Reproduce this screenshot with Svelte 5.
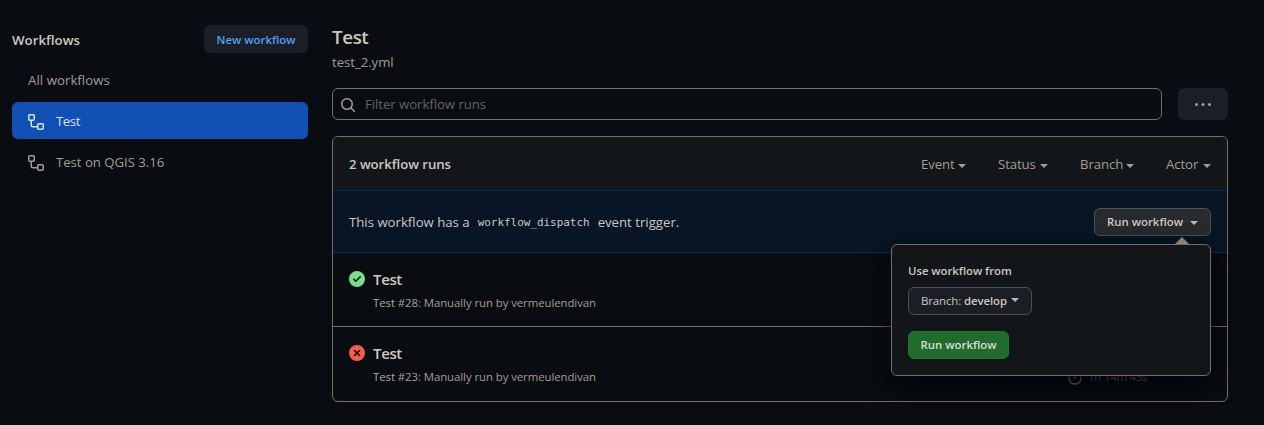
<script>
  const filters = [
    { name: 'Event', width: 34 },
    { name: 'Status', width: 39 },
    { name: 'Branch', width: 43 },
    { name: 'Actor', width: 34 }
  ];
  const runs = [
    { number: 28, ok: true, duration: '' },
    { number: 23, ok: false, duration: '1h 14m 43s' }
  ];
</script>

{#snippet workflowIcon()}
  <svg class="wf-icon" width="16" height="16" viewBox="0 0 16 16" fill="currentColor">
    <path d="M0 1.75C0 .784.784 0 1.75 0h3.5C6.216 0 7 .784 7 1.75v3.5A1.75 1.75 0 0 1 5.25 7H4v4a1 1 0 0 0 1 1h4v-1.25C9 9.784 9.784 9 10.75 9h3.5c.966 0 1.75.784 1.75 1.75v3.5A1.75 1.75 0 0 1 14.25 16h-3.5A1.75 1.75 0 0 1 9 14.25v-.75H5A2.5 2.5 0 0 1 2.5 11V7h-.75A1.75 1.75 0 0 1 0 5.25Zm1.75-.25a.25.25 0 0 0-.25.25v3.5c0 .138.112.25.25.25h3.5a.25.25 0 0 0 .25-.25v-3.5a.25.25 0 0 0-.25-.25Zm9 9a.25.25 0 0 0-.25.25v3.5c0 .138.112.25.25.25h3.5a.25.25 0 0 0 .25-.25v-3.5a.25.25 0 0 0-.25-.25Z" />
  </svg>
{/snippet}

<div class="page">
  <aside>
    <div class="side-head">
      <h2>Workflows</h2>
      <button class="new">New workflow</button>
    </div>
    <nav>
      <span class="all">All workflows</span>
      <span class="item selected">{@render workflowIcon()}<span>Test</span></span>
      <span class="item">{@render workflowIcon()}<span>Test on QGIS 3.16</span></span>
    </nav>
  </aside>

  <main>
    <h1>Test</h1>
    <div class="file">test_2.yml</div>
    <div class="tools">
      <div class="search">
        <svg width="16" height="16" viewBox="0 0 16 16" fill="currentColor">
          <path d="M10.68 11.74a6 6 0 0 1-7.922-8.982 6 6 0 0 1 8.982 7.922l3.04 3.04a.749.749 0 1 1-1.06 1.06ZM11.5 7a4.499 4.499 0 1 0-8.997 0A4.499 4.499 0 0 0 11.5 7Z" />
        </svg>
        <span>Filter workflow runs</span>
      </div>
      <button class="more" aria-label="More">
        <svg width="16" height="16" viewBox="0 0 16 16" fill="currentColor">
          <circle cx="1.5" cy="8.5" r="1.5" /><circle cx="8" cy="8.5" r="1.5" /><circle cx="14.5" cy="8.5" r="1.5" />
        </svg>
      </button>
    </div>

    <section class="box">
      <header>
        <strong>2 workflow runs</strong>
        <div class="filters">
          {#each filters as f}
            <span class="filter"><span style="width: {f.width}px">{f.name}</span><i class="caret"></i></span>
          {/each}
        </div>
      </header>

      <div class="dispatch">
        <p>
          <span class="lead">This workflow has a</span><code>workflow_dispatch</code><span>event trigger.</span>
        </p>
        <div class="run-menu">
          <button class="run"><span>Run workflow</span><i class="caret"></i></button>
          <div class="popover">
            <div class="label">Use workflow from</div>
            <button class="branch"><span>Branch:</span><b>develop</b><i class="caret"></i></button>
            <button class="go">Run workflow</button>
          </div>
        </div>
      </div>

      {#each runs as r}
        <div class="row">
          <svg width="16" height="16" viewBox="0 0 16 16" fill={r.ok ? '#7ade8b' : '#fb5a50'}>
            {#if r.ok}
              <path d="M8 16A8 8 0 1 1 8 0a8 8 0 0 1 0 16Zm3.78-9.72a.751.751 0 0 0-.018-1.042.751.751 0 0 0-1.042-.018L6.75 9.19 5.28 7.72a.751.751 0 0 0-1.042.018.751.751 0 0 0-.018 1.042l2 2a.75.75 0 0 0 1.06 0Z" />
            {:else}
              <path d="M2.343 13.657A8 8 0 1 1 13.658 2.343 8 8 0 0 1 2.343 13.657ZM6.03 4.97a.751.751 0 0 0-1.042.018.751.751 0 0 0-.018 1.042L6.94 8 4.97 9.97a.749.749 0 0 0 .326 1.275.749.749 0 0 0 .734-.215L8 9.06l1.97 1.97a.749.749 0 0 0 1.275-.326.749.749 0 0 0-.215-.734L9.06 8l1.97-1.97a.749.749 0 0 0-.326-1.275.749.749 0 0 0-.734.215L8 6.94Z" />
            {/if}
          </svg>
          <div class="info">
            <h3>Test</h3>
            <div class="desc"><span class="wf">Test</span> #{r.number}: Manually run by vermeulendivan</div>
          </div>
          {#if r.duration}
            <div class="time">
              <svg width="16" height="16" viewBox="0 0 16 16" fill="none" stroke="currentColor" stroke-width="1.5">
                <circle cx="8" cy="9" r="6" /><path d="M8 9.5V6M6 1h4" stroke-linecap="round" />
              </svg>
              <span>{r.duration}</span>
            </div>
          {/if}
        </div>
      {/each}
    </section>
  </main>
</div>

<style>
  :global(body) { background: #090c10; }
  * { box-sizing: border-box; }
  h1, h2, h3, p { margin: 0; font-weight: 600; }
  button { font: inherit; color: inherit; margin: 0; }
  svg { display: block; flex: none; }
  .page {
    display: grid;
    grid-template-columns: 296px 896px;
    gap: 24px;
    padding: 0 12px;
    height: 425px;
    overflow: hidden;
    color: #cdc8c0;
    font: 13.2px/20px "Open Sans", "Noto Sans", sans-serif;
    white-space: nowrap;
  }
  .side-head { display: flex; justify-content: space-between; align-items: center; padding-top: 25px; }
  h2 { padding-top: 2px; font-size: 13.3px; }
  .new {
    width: 104px; height: 28px; padding: 1px 0 0; border: 0; border-radius: 6px;
    background: #1b1e25; color: #4ba3fb; font-size: 11.4px; font-weight: 600;
  }
  nav { display: flex; flex-direction: column; padding-top: 9px; color: #a69d90; }
  .all { height: 36px; padding: 8px 16px; letter-spacing: 0.06px; }
  .item {
    display: flex; align-items: center; gap: 12px; height: 37px;
    margin-top: 4px; padding: 0 16px; border-radius: 6px;
  }
  .item > span { letter-spacing: -0.03px; }
  .wf-icon { position: relative; top: 1px; }
  .selected { background: #1150b4; color: #d9e3ec; }
  .selected > span { letter-spacing: -0.4px; }
  h1 { padding-top: 22px; font-size: 18.8px; line-height: 30px; letter-spacing: -0.4px; }
  .file { color: #a69d90; letter-spacing: -0.04px; }
  .tools { display: flex; gap: 16px; margin-top: 16px; }
  .search {
    display: flex; align-items: center; gap: 9px; width: 830px; height: 32px;
    padding: 0 7px; border: 1px solid #786f62; border-radius: 6px; color: #a69d90;
  }
  .search svg { position: relative; top: 1px; }
  .search span { color: #66645f; letter-spacing: -0.05px; }
  .more {
    display: flex; align-items: center; justify-content: center; width: 50px; height: 32px;
    padding: 0; border: 0; border-radius: 6px; background: #1b1e25; color: #a69d90;
  }
  .box { height: 266px; margin-top: 16px; border: 1px solid #786f62; border-radius: 6px; }
  header {
    display: flex; justify-content: space-between; align-items: center; height: 53px;
    padding: 0 16px; border-radius: 5px 5px 0 0; background: #131619;
  }
  strong { font-weight: 600; letter-spacing: -0.04px; }
  .filters { display: flex; gap: 32px; color: #a69d90; }
  .filter { display: flex; align-items: center; gap: 3px; letter-spacing: -0.1px; }
  .caret { flex: none; width: 0; height: 0; border: 4px solid transparent; border-top-color: currentColor; border-bottom: 0; position: relative; top: 2px; }
  .dispatch {
    display: flex; justify-content: space-between; align-items: center; height: 63px; padding: 0 16px;
    border: solid #042a60; border-width: 1px 0; background: #081525;
  }
  .dispatch p { display: flex; align-items: center; font-weight: 400; }
  code { padding: 2px 8px 0; font: 10.95px/20px "DejaVu Sans Mono", monospace; }
  .run-menu { position: relative; }
  .run {
    display: flex; align-items: center; gap: 7px; width: 117px; height: 28px; padding: 1px 12px 0;
    border: 1px solid #4c5153; border-radius: 6px; background: #272b2d; font-size: 11.4px; font-weight: 600;
  }
  .run .caret { top: 1px; color: #bcb7b0; }
  .popover {
    position: absolute; z-index: 2; top: 36px; right: 0; width: 320px; height: 132px;
    padding: 16px; border: 1px solid #786f62; border-radius: 6px; background: #131619;
    box-shadow: 0 8px 24px #010409;
  }
  .popover::before {
    content: ""; position: absolute; top: -8px; right: 21px;
    border: 7px solid transparent; border-top: 0; border-bottom-color: #8d8272;
  }
  .label { font-size: 11.4px; font-weight: 600; letter-spacing: -0.05px; }
  .branch {
    display: flex; align-items: center; gap: 3px; width: 124px; height: 28px; margin-top: 6px;
    padding: 1px 12px 0; border: 1px solid #4c5153; border-radius: 6px; background: #1b1e25;
    font-size: 11.4px; letter-spacing: -0.1px;
  }
  .branch b { font-weight: 600; }
  .branch .caret { top: -1px; left: 1px; color: #bcb7b0; }
  .go {
    width: 101px; height: 28px; margin-top: 16px; padding: 1px 0 0; border: 1px solid #23732f;
    border-radius: 6px; background: #1f6c2c; color: #dedbd6; font-size: 11.4px; font-weight: 600;
  }
  .row { display: flex; gap: 8px; height: 73px; padding: 18px 16px 0; }
  .row + .row { height: 75px; border-top: 1px solid #786f62; }
  h3 { margin-top: -1px; font-size: 15.1px; line-height: 18px; letter-spacing: -0.4px; }
  .desc { margin-top: 6px; font-size: 11.4px; line-height: 18px; letter-spacing: -0.07px; color: #a69d90; }
  .wf { color: #b3aa9d; }
  .time {
    display: flex; align-items: center; gap: 5px; width: 144px; margin-left: auto;
    padding-top: 8px; color: #8a8378; font-size: 11.4px; letter-spacing: -0.2px;
  }
</style>
